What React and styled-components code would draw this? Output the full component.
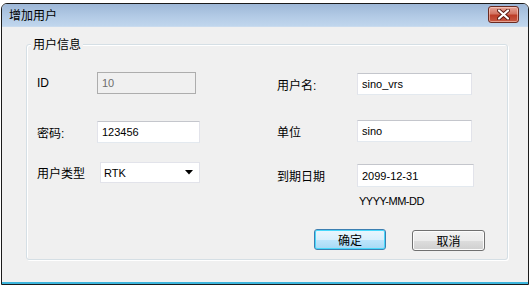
import React from 'react'
import styled, { createGlobalStyle } from 'styled-components'

const GlobalStyle = createGlobalStyle`
  html, body {
    margin: 0;
    padding: 0;
    background: #ffffff;
  }
  body {
    font-family: "Liberation Sans", "Noto Sans CJK SC", sans-serif;
    font-size: 12px;
    color: #000;
  }
  * { box-sizing: border-box; }
`

const Window = styled.div`
  width: 528px;
  height: 282px;
  margin: 3px 0 0 1px;
  border: 1px solid #1b1b1b;
  border-radius: 6px 6px 0 0;
  overflow: hidden;
  display: flex;
  flex-direction: column;
`

const TitleBar = styled.div`
  height: 23px;
  flex: none;
  display: flex;
  justify-content: space-between;
  align-items: flex-start;
  padding: 0 9px 0 7px;
  background: linear-gradient(#9db7d7, #b2cae5 55%, #c0d6ed);
  border-bottom: 1px solid #c9dbee;
`

const Title = styled.span`
  line-height: 22px;
  font-size: 12px;
  font-family: "Noto Sans CJK SC", sans-serif;
  color: #000;
`

const CloseButton = styled.div`
  width: 31px;
  height: 17px;
  margin-top: 2px;
  border: 1px solid #6a2b22;
  border-radius: 3px;
  background: linear-gradient(#e6a598, #d37563 45%, #bd3d28 55%, #c65a44);
  box-shadow: inset 0 0 0 1px rgba(255, 220, 210, 0.55);
  display: flex;
  align-items: center;
  justify-content: center;
`

const Body = styled.div`
  flex: 1;
  background: #f0f0f0;
  border-bottom: 2px solid #3db5dc;
  padding: 17px 0 0 24px;
`

const Group = styled.div`
  position: relative;
  width: 482px;
  height: 216px;
  border: 1px solid #d5dfe5;
  border-radius: 3px;
  box-shadow: inset 1px 1px 0 #ffffff, 1px 1px 0 #ffffff;
  display: flex;
  flex-direction: column;
`

const Legend = styled.span`
  position: absolute;
  top: -9px;
  left: 4px;
  padding: 0 2px;
  background: #f0f0f0;
  line-height: 16px;
  font-family: "Noto Sans CJK SC", sans-serif;
`

const Form = styled.div`
  height: 184px;
  padding-left: 10px;
  display: grid;
  grid-template-columns: 240px 1fr;
`

const Column = styled.div`
  display: flex;
  flex-direction: column;
  padding-top: ${p => p.$top}px;
`

const Row = styled.div`
  display: flex;
  align-items: center;
  margin-top: ${p => p.$mt || 0}px;
`

const Label = styled.span`
  width: ${p => p.$w}px;
  flex: none;
  font-size: 12px;
`

const TextBox = styled.input`
  width: ${p => p.$w}px;
  height: ${p => p.$h || 22}px;
  padding: 0 4px;
  border: 1px solid #e2e3ea;
  border-top-color: #c4c6cc;
  border-bottom-color: #e3e9ef;
  background: #ffffff;
  font-family: "Liberation Sans", sans-serif;
  font-size: 11px;
  color: #000;
  outline: none;

  &:disabled {
    background: #f0f0f0;
    border-color: #adadad;
    color: #6d6d6d;
  }
`

const Combo = styled.div`
  width: ${p => p.$w}px;
  height: 21px;
  padding: 0 6px 0 3px;
  border: 1px solid #e2e3ea;
  background: #ffffff;
  display: flex;
  align-items: center;
  justify-content: space-between;
  font-size: 11px;
`

const Hint = styled.div`
  margin: 8px 0 0 82px;
  line-height: 13px;
  font-size: 11px;
  letter-spacing: -0.5px;
  color: #000;
`

const ButtonRow = styled.div`
  display: flex;
  justify-content: flex-end;
  gap: 26px;
  padding-right: 22px;
`

const Button = styled.button`
  width: ${p => (p.$primary ? 72 : 73)}px;
  height: 21px;
  margin-top: ${p => (p.$primary ? 0 : 1)}px;
  padding: 0;
  border: 1px solid ${p => (p.$primary ? '#3c7fb1' : '#707070')};
  border-radius: 3px;
  background: ${p =>
    p.$primary
      ? 'linear-gradient(#eaf6fd, #d9f0fc 50%, #bee6fd 51%, #a7d9f5)'
      : 'linear-gradient(#f2f2f2, #ebebeb 50%, #dddddd 51%, #cfcfcf)'};
  box-shadow: ${p => (p.$primary ? 'inset 0 0 0 1px #48d8fb' : 'inset 0 0 0 1px #fcfcfc')};
  font-family: "Noto Sans CJK SC", sans-serif;
  font-size: 12px;
  line-height: 19px;
  color: #000;
`

function CloseIcon() {
  return (
    <svg width="13" height="11" viewBox="0 0 13 11">
      <path d="M2 1.5 L11 9.5 M11 1.5 L2 9.5" stroke="#5a1a12" strokeWidth="4" strokeLinecap="round" />
      <path d="M2 1.5 L11 9.5 M11 1.5 L2 9.5" stroke="#ffffff" strokeWidth="2.2" strokeLinecap="round" />
    </svg>
  )
}

function DownArrow() {
  return (
    <svg width="8" height="5" viewBox="0 0 8 5">
      <path d="M0 0 H8 L4 4.5 Z" fill="#000" />
    </svg>
  )
}

export default function App() {
  return (
    <>
      <GlobalStyle />
      <Window>
        <TitleBar>
          <Title>增加用户</Title>
          <CloseButton><CloseIcon /></CloseButton>
        </TitleBar>
        <Body>
          <Group>
            <Legend>用户信息</Legend>
            <Form>
              <Column $top={27}>
                <Row>
                  <Label $w={60}>ID</Label>
                  <TextBox $w={99} defaultValue="10" disabled />
                </Row>
                <Row $mt={27}>
                  <Label $w={60}>密码:</Label>
                  <TextBox $w={103} defaultValue="123456" />
                </Row>
                <Row $mt={19}>
                  <Label $w={63}>用户类型</Label>
                  <Combo $w={100}>
                    <span>RTK</span>
                    <DownArrow />
                  </Combo>
                </Row>
              </Column>
              <Column $top={28}>
                <Row>
                  <Label $w={80}>用户名:</Label>
                  <TextBox $w={115} defaultValue="sino_vrs" />
                </Row>
                <Row $mt={25}>
                  <Label $w={80}>单位</Label>
                  <TextBox $w={115} defaultValue="sino" />
                </Row>
                <Row $mt={22}>
                  <Label $w={80}>到期日期</Label>
                  <TextBox $w={117} $h={23} defaultValue="2099-12-31" />
                </Row>
                <Hint>YYYY-MM-DD</Hint>
              </Column>
            </Form>
            <ButtonRow>
              <Button $primary>确定</Button>
              <Button>取消</Button>
            </ButtonRow>
          </Group>
        </Body>
      </Window>
    </>
  )
}
